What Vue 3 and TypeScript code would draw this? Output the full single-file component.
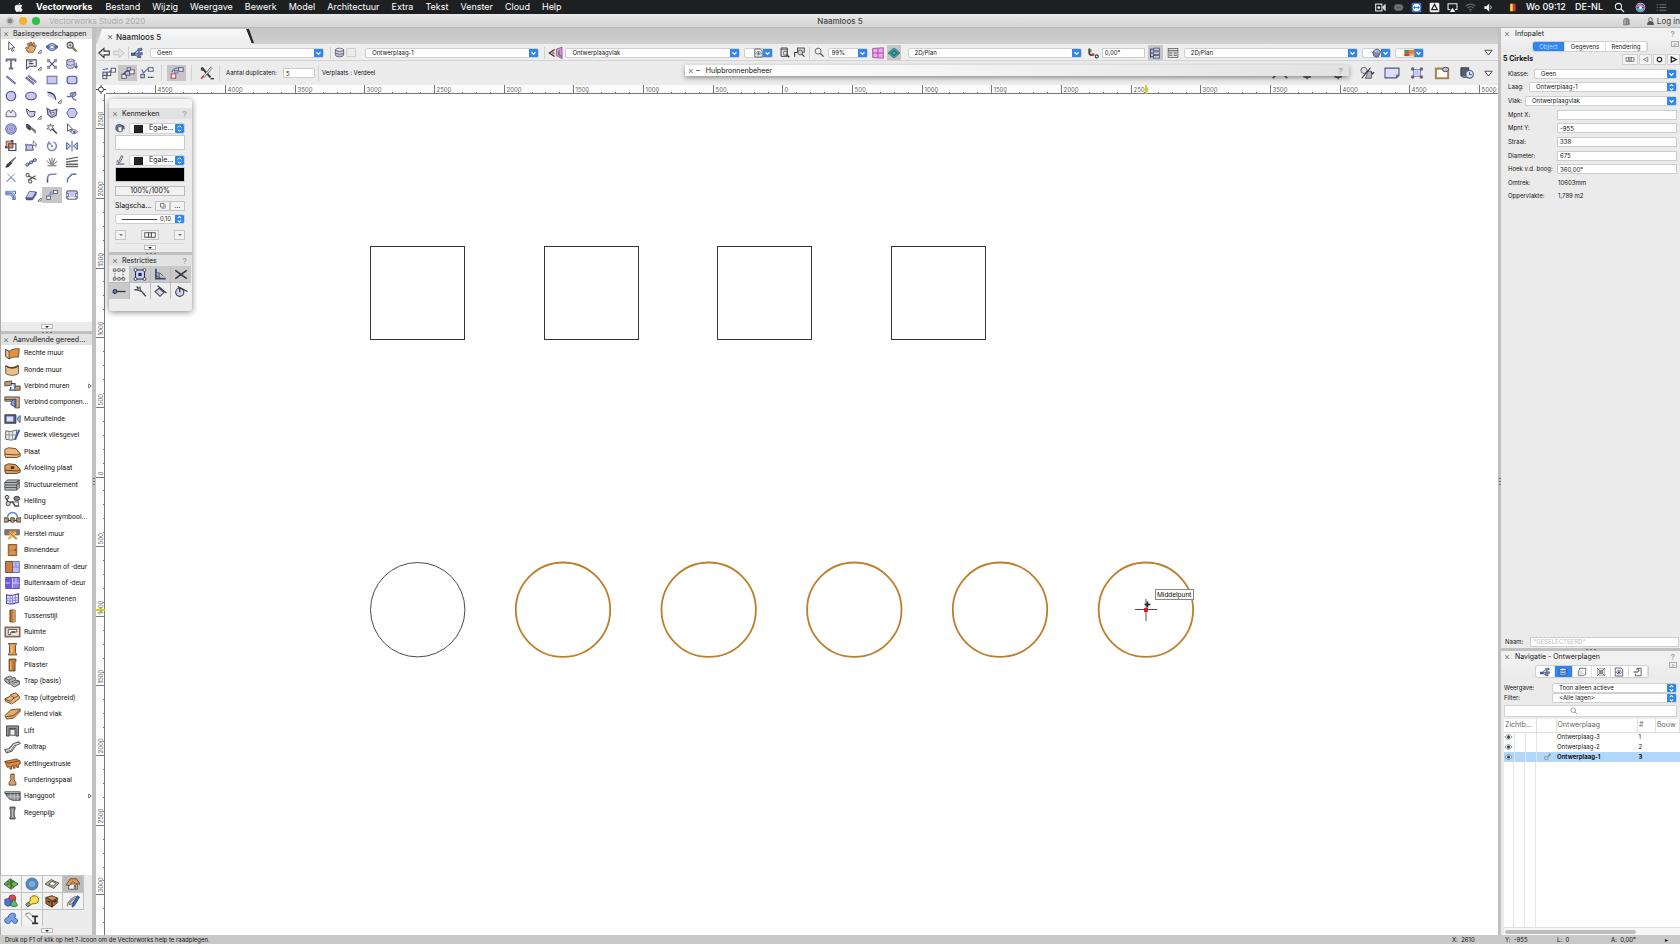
<script setup lang="ts">
import { ref } from 'vue'

interface Tick { at: number; label: string }
interface Layer { name: string; nr: number }

const menus = ['Bestand', 'Wijzig', 'Weergave', 'Bewerk', 'Model', 'Architectuur', 'Extra', 'Tekst', 'Venster', 'Cloud', 'Help']

const L = '#c8c8f6'
const O = '#4c4c5c'
const B = '#7f86c4'

const icons: Record<string, string> = {
  apple: `<path fill="#f2f2f2" d="M10.6 1c.1 1.500-1.200 2.900-2.700 2.900C7.700 2.500 9.100 1.100 10.600 1zM8.200 4.800c.7 0 1.400-.8 2.700-.8 1 0 2 .5 2.600 1.400-2.300 1.400-1.900 4.600.5 5.500-.6 1.600-1.800 3.600-3 3.600-.9 0-1.300-.6-2.400-.6s-1.500.6-2.400.6C4.500 14.500 2.500 11 2.500 8.200 2.500 5.500 4.200 4 5.900 4c1.100 0 1.600.8 2.300.8z"/>`,
  camera: `<rect x="1" y="3" width="9" height="10" fill="none" stroke="#eee" stroke-width="1.500"/><circle cx="5.500" cy="8" r="2" fill="#eee"/><path d="M11 8l3-4v8zM15 3v10" stroke="#eee" fill="#eee"/>`,
  cloudcc: `<rect x="1" y="3" width="14" height="10" rx="5" fill="#555"/><path d="M9 6a3 3 0 1 0 0 4M9 10a2.500 2.500 0 1 0 0-4" fill="none" stroke="#999" stroke-width="1.300"/>`,
  viewer: `<rect x="1" y="1" width="14" height="14" rx="2" fill="#2f7de0"/><circle cx="8" cy="8" r="5.500" fill="#fff"/><path d="M3 8l3-2.500v1.700h4V5.500L13 8l-3 2.500V8.800H6v1.700z" fill="#2f7de0"/>`,
  drive: `<rect x="1" y="1" width="14" height="14" rx="2" fill="#f4f4f4"/><path d="M8 3.500L12 11H4z" fill="none" stroke="#222" stroke-width="1.800"/>`,
  airplay: `<path d="M4.500 11H1.500V2.500h13V11h-3" fill="none" stroke="#eee" stroke-width="1.500"/><path d="M8 8.500l4 6H4z" fill="#eee"/>`,
  wifi: `<path d="M1 6a10 10 0 0 1 14 0M3.500 8.800a6.500 6.500 0 0 1 9 0M6 11.500a3 3 0 0 1 4 0" fill="none" stroke="#666" stroke-width="1.600"/><circle cx="8" cy="13.500" r="1" fill="#666"/>`,
  speaker: `<path d="M2 6h3l4-4v12l-4-4H2z" fill="#f2f2f2"/><path d="M11 5.500a4 4 0 0 1 0 5" stroke="#f2f2f2" fill="none" stroke-width="1.300"/>`,
  flag: `<path fill="#222" d="M2 2.500h4v11H2z"/><path fill="#f8d83a" d="M6 2.500h4v11H6z"/><path fill="#e0303c" d="M10 2.500h4v11h-4z"/>`,
  search: `<circle cx="6.500" cy="6.500" r="4.500" fill="none" stroke="#eee" stroke-width="1.500"/><path d="M10 10l4.500 4.500" stroke="#eee" stroke-width="1.800"/>`,
  searchGrey: `<circle cx="6.500" cy="6.500" r="4.700" fill="none" stroke="#777" stroke-width="1.300"/><path d="M10 10l4.500 4.500" stroke="#777" stroke-width="1.500"/>`,
  siri: `<circle cx="8" cy="8" r="7" fill="#c9c9d8"/><circle cx="8" cy="8" r="6" fill="#4a4f86"/><path d="M2 8c2-7 8-7 12 0-5-2-8-2-12 0z" fill="#d77fb4"/><path d="M2.500 9c4-1 7-1 11 0-2 6-9 6-11 0z" fill="#55b6e6"/><circle cx="8" cy="8" r="2" fill="#fff"/>`,
  list: `<path d="M1 4h2M5 4h10M1 8h2M5 8h10M1 12h2M5 12h10" stroke="#777" stroke-width="1.400"/>`,
  bell: `<path d="M3 14V7a4 5 0 0 1 8 0v7zM8 14V4a3 5 0 0 1 5 3v7" fill="#aaa" stroke="#666" stroke-width="1.200"/>`,
  lock: `<path d="M5 7V4a3 3 0 0 1 6 0v3" fill="none" stroke="#555" stroke-width="1.500"/><path d="M2 14c0-5 2-7 6-7s6 2 6 7z" fill="#555"/>`,

  select: `<path d="M5 1v11l2.700-2.500L9.500 14l2-1-2-4h3.500z" fill="#fff" stroke="${O}" stroke-width="1.200"/>`,
  hand: `<path d="M4 15L.5 9.500 2 8l2.500 2L3.500 3.500l1.800-.6L6.500 7 6.600 1.500h1.900L9.200 7l1.600-5 1.700.5-.8 5.500 1.800-2.700 1.500.9L12.800 12 11 15z" fill="#e9a868" stroke="#5d4430" stroke-width="1"/>`,
  fly: `<ellipse cx="8" cy="8" rx="7.500" ry="3.500" fill="#9fb4e8" stroke="#35497c"/><circle cx="8" cy="8" r="5" fill="#aeb9f0" stroke="#35497c"/><path d="M0 7l3-2v5zM16 7l-3-2v5z" fill="#2f62b5"/><path d="M4 8l4-2 4 2-4 2.500z" fill="#fff" stroke="#35497c" stroke-width=".8"/>`,
  zoom: `<circle cx="5.500" cy="5.500" r="4" fill="#e8e6dc" stroke="${O}" stroke-width="1.400"/><path d="M8.500 8.500l5.500 5.500" stroke="#8d7a55" stroke-width="3"/><path d="M3.500 5.500h4M5.500 3.500v4" stroke="${O}"/>`,
  text: `<path d="M2 5V2h12v3M8 2v12M5 14h6" fill="none" stroke="#6b6b80" stroke-width="2.400"/>`,
  callout: `<path d="M2 11V2.500h13V11H6l-4 3.500z" fill="#f0f0f8" stroke="${O}" stroke-width="1.400"/><path d="M5 5h5M5 7.500h6" stroke="${O}" stroke-width="1.600"/>`,
  locus: `<path d="M3.500 3.500l9 9M12.500 3.500l-9 9" stroke="${O}" stroke-width="1.500"/><path d="M2 2h3v3H2zM11 2h3v3h-3zM2 11h3v3H2zM11 11h3v3h-3z" fill="#a3a3c8" stroke="${O}" stroke-width=".7"/>`,
  cyl: `<path d="M1 3v8c0 4 10 4 10 0V3z" fill="${L}" stroke="${O}"/><path d="M1 3c2-2 8-2 10 0-2 2-8 2-10 0zM1 8c2 2 8 2 10 0" fill="#ececff" stroke="${O}"/><path d="M13.500 6v7M11.500 11l2 2.500 2-2.500" fill="none" stroke="#35539c" stroke-width="1.400"/>`,
  line: `<path d="M2 3l12 10" stroke="#55587e" stroke-width="3"/><path d="M2 3l12 10" stroke="#a9addf" stroke-width="1.300"/>`,
  dline: `<path d="M1 4.500l11 9M4 2l11 9" stroke="#55587e" stroke-width="2.600"/><path d="M1 4.500l11 9M4 2l11 9" stroke="#a9addf" stroke-width="1"/>`,
  rect: `<rect x="1.500" y="3" width="13" height="10" fill="${L}" stroke="#666680" stroke-width="1.300"/>`,
  rrect: `<rect x="1.500" y="3" width="13" height="10" rx="3.500" fill="${L}" stroke="#55587e" stroke-width="1.600"/>`,
  circle: `<circle cx="8" cy="8" r="6.300" fill="${L}" stroke="#55587e" stroke-width="1.600"/>`,
  ellipse: `<ellipse cx="8" cy="8" rx="7" ry="5" fill="${L}" stroke="#55587e" stroke-width="1.600"/>`,
  arc: `<path d="M2 3c6 0 11 4 11 10L2 8z" fill="${L}"/><path d="M2 3c6 0 11 4 11 10" fill="none" stroke="#3f4158" stroke-width="1.800"/>`,
  free: `<path d="M1 8c4 3 8-1 11-5 3 4-2 7-5 5-3-3 0-5 4-4M8 8c0 4 4 6 6 5" fill="none" stroke="#6a71a8" stroke-width="1.800"/>`,
  poly1: `<path d="M1.500 13V8L5 4l3 4 2-4 4.500 4v5z" fill="#e4e4f4" stroke="#666" stroke-width="1.300"/>`,
  poly2: `<path d="M1.500 2.500l5 3.500h7l-1 6-5 1.500-4-4z" fill="${L}" stroke="${O}" stroke-width="1.300"/>`,
  poly3: `<path d="M1.500 2l5 3 8-2-1 8-6 3-5-4z" fill="${L}" stroke="#55587e" stroke-width="1.600"/><path d="M4.500 5.500L7 8l4-1-.5 3L7.500 11z" fill="#fff" stroke="#55587e"/>`,
  hex: `<path d="M4.500 2h7L15 8l-3.500 6h-7L1 8z" fill="${L}" stroke="#5a6280" stroke-width="1.300"/>`,
  spiral: `<circle cx="8" cy="8" r="7" fill="${L}" stroke="#6b70a8" stroke-width="1.500"/><circle cx="8" cy="8" r="4.700" fill="none" stroke="${B}" stroke-width="1.400"/><circle cx="8" cy="8" r="2.400" fill="#9da3e0" stroke="${B}"/>`,
  dropper: `<path d="M2 1.500l4 1.500 3 4-2.500 2.500-4-3z" fill="#4b4b66" stroke="#333"/><path d="M8 7l6.500 6.500M9.500 6.500l5 5" stroke="#777" stroke-width="1.600"/>`,
  wand: `<path d="M7 7l7.500 7" stroke="#444" stroke-width="2.200"/><path d="M6 1l1 3 3-1-1.500 3L11 8 7.500 8 6 11 5 8 1 8l2.500-2L2 3l3 1z" fill="#eee" stroke="${O}"/>`,
  arrowEye: `<path d="M2 1v10l2.500-2L6 12l1.500-1L6 8.500h3z" fill="#fff" stroke="${O}" stroke-width="1.200"/><path d="M6 12c3-4 7-4 9.500 0-3 3-7 3-9.500 0z" fill="#dfe4ff" stroke="${O}"/><circle cx="11" cy="12" r="1.600" fill="#2f62b5"/>`,
  scale: `<rect x="1.500" y="1.500" width="9" height="9" fill="#f3a65c" stroke="${O}"/><rect x="5" y="5" width="9.500" height="9" fill="none" stroke="#3f4158" stroke-width="1.500"/><path d="M5 5h5.500v5.500H5z" fill="#e98a34" stroke="#35539c"/><path d="M0 8h3v3H0zM8 0h3v3H8z" fill="#35497c"/>`,
  reshape: `<path d="M1.500 6.500h8l1.500 7H1.500z" fill="${L}" stroke="${O}" stroke-width="1.300"/><path d="M11 1v7l1.500-1.500L14 9l1-.7-1-2h1.800z" fill="#fff" stroke="${O}" stroke-width=".9"/><path d="M0 5h3v3H0zM0 12h3v3H0z" fill="${B}"/>`,
  rotate: `<path d="M4 3.500a6 6 0 1 0 6-1" fill="none" stroke="${B}" stroke-width="2"/><path d="M3 1v5h5z" fill="${B}"/><circle cx="8" cy="8" r="1.500" fill="${B}"/>`,
  mirror: `<path d="M8 1v14" stroke="#35539c" stroke-width="1.300"/><path d="M1 3.500v9L6 8zM15 3.500v9L10 8z" fill="#dfe4ff" stroke="#35497c" stroke-width="1.300"/>`,
  knife: `<path d="M14.500 1.500L6 8l2 2z" fill="#999" stroke="${O}"/><path d="M7 8l2 2-5 4.500-3 .5 2-4z" fill="#3d3d4c" stroke="#222" stroke-width=".8"/>`,
  chain: `<path d="M1 13L15 4" stroke="#35497c" stroke-width="2"/><circle cx="3" cy="11.500" r="2" fill="#a9b8e8" stroke="#35497c"/><circle cx="8" cy="8.500" r="2" fill="#a9b8e8" stroke="#35497c"/><circle cx="13" cy="5.500" r="2" fill="#a9b8e8" stroke="#35497c"/>`,
  comb: `<path d="M2 13h12M8 13L1 6M8 13L4 3M8 13V2M8 13l4-10M8 13l7-6" stroke="#555" stroke-width="1.200"/><path d="M5 13l3-4 3 4z" fill="#999"/>`,
  hatch: `<path d="M0 4.500L16 1.500M0 8L16 6M0 11h16M0 14h16" stroke="#666" stroke-width="1.900"/>`,
  trim: `<path d="M2 13l6-6 6 6" stroke="#8fa0c8" fill="none" stroke-width="1.800"/><path d="M3 2l5 5 5-5" stroke="#999" fill="none" stroke-width="1.300"/>`,
  scissors: `<path d="M4 5l11 5M4 11L14 5" stroke="#555" stroke-width="1.800"/><circle cx="3.500" cy="4" r="2.200" fill="none" stroke="#666" stroke-width="1.400"/><circle cx="7" cy="12.500" r="2.200" fill="none" stroke="#666" stroke-width="1.400"/>`,
  fillet: `<path d="M2 14V9c0-4 2-6 6-6h6" fill="none" stroke="${B}" stroke-width="2.200"/><path d="M2 14V9" stroke="#555" stroke-width="1.500"/>`,
  chamfer: `<path d="M2 14V9l6-6h6" fill="none" stroke="#5974ae" stroke-width="1.900"/>`,
  offset: `<path d="M1 3h5c5 0 8 4 8 11h-4c0-4-1-6-4-6H1z" fill="#b9c6ee" stroke="#6b7fc0" stroke-width="1.200"/><path d="M1 5.500h5c3 0 6 3 6 8.500M10 3h4v4" fill="none" stroke="#35539c" stroke-width="1.200"/>`,
  eraser: `<path d="M6 3l9 1-5 8H1z" fill="#c6c9ee" stroke="${O}"/><path d="M1 12l9 0 5-8v3l-5 7.500H2z" fill="#5560a8" stroke="#35497c" stroke-width=".8"/>`,
  dup: `<path d="M3 9L9 4" stroke="#6b7fae" stroke-width="1.300"/><rect x="1" y="9.500" width="5" height="4.500" fill="#eee" stroke="${O}"/><rect x="10" y="2" width="5" height="4" fill="#eef" stroke="${O}"/><rect x="5.500" y="4" width="4" height="3" fill="#a9b8e8" stroke="#5974ae" stroke-width=".8"/>`,
  plate: `<rect x="1" y="2.500" width="14" height="11" rx="1.500" fill="${L}" stroke="${O}" stroke-width="1.300"/><path d="M1 6h2v4H1M15 6h-2v4h2" fill="#fff" stroke="${O}"/><path d="M4 12h8" stroke="#fff" stroke-width="1.500"/>`,

  back: `<path d="M1 8l7-6v3.500h7v5H8V14z" fill="#f6f6f6" stroke="#333" stroke-width="1.400"/>`,
  fwd: `<path d="M15 8L8 2v3.500H1v5h7V14z" fill="#e4e4e4" stroke="#c4c4c4" stroke-width="1.300"/>`,
  classes: `<path d="M3 9.500L9 4.500M3 9.500l6-.5M3 9.500l6 3" stroke="#35497c" stroke-width="1.400"/><path d="M9 2.500l5-1 1 2.500-5 2zM9 7.500h6v2.700H9zM9 11.500l4 .3V14H9z" fill="#6f8cc8" stroke="#2c3c68" stroke-width=".9"/><path d="M0 8.200h4.500v3H0z" fill="#4a66a4" stroke="#2c3c68" stroke-width=".9"/>`,
  layers: `<path d="M2 4v8c2 3 10 3 12 0V4z" fill="#b8b8e0" stroke="#444"/><path d="M2 4c2-3 10-3 12 0-2 3-10 3-12 0zM2 8c2 3 10 3 12 0" fill="#e6e6fa" stroke="#444"/>`,
  blank: `<rect x="1" y="2" width="13" height="12" rx="1" fill="#ececec" stroke="#bbb"/>`,
  planeEye: `<path d="M7 4L1 8l6 4" fill="none" stroke="#333" stroke-width="1.500"/><circle cx="5.500" cy="8" r="1.500" fill="#b08030"/><path d="M9 3.500l6.500-2v13L9 11z" fill="#e08fdc" stroke="#8a4088" stroke-width=".8"/><path d="M12 5v5l3 2" fill="none" stroke="#2f8a60" stroke-width="1.500"/>`,
  eyePage: `<path d="M2 1.500h9l3 3v10H2z" fill="#eee" stroke="#444" stroke-width="1.200"/><path d="M3.500 8.500c3-4 6-4 9 0-3 3.500-6 3.500-9 0z" fill="#fff" stroke="#35497c"/><circle cx="8" cy="8.500" r="1.800" fill="#35497c"/>`,
  pageZoom: `<path d="M3 1.500h9v12H3z" fill="#f6f6f6" stroke="#333" stroke-width="1.400"/><path d="M3 4h9" stroke="#333"/><circle cx="9" cy="9" r="3" fill="#ddd" stroke="#333"/><path d="M11 11l4 4" stroke="#333" stroke-width="1.800"/>`,
  objZoom: `<rect x="5" y="1.500" width="10" height="6" fill="#dde" stroke="#444" stroke-width="1.300"/><circle cx="9" cy="8" r="3.500" fill="#ccc" stroke="#333"/><path d="M11.500 10.500L15 14M1 14V8h4" stroke="#333" stroke-width="1.500" fill="none"/>`,
  mag: `<circle cx="6" cy="6" r="4.300" fill="#f4f4f4" stroke="#555" stroke-width="1.300"/><path d="M9 9l5 5" stroke="#555" stroke-width="2"/>`,
  pinkGrid: `<path d="M1 2l14-1v14L1 14z" fill="#eda9e8" stroke="#b04fab" stroke-width="1.300"/><path d="M8 1.500v13M1 8h14" stroke="#b04fab" stroke-width="1.400"/>`,
  teal: `<path d="M0 8l7-6h2l7 6-7 6H7z" fill="#3f9ea2" stroke="#1f6f76"/><path d="M3.500 8h9M8 4v8" stroke="#155a60" stroke-width="1.500"/><circle cx="8" cy="8" r="2.500" fill="#5ab5b5" stroke="#155a60"/>`,
  angle: `<path d="M3 2v6a3 3 0 0 0 5 2" fill="none" stroke="#444" stroke-width="2.500"/><path d="M5 3v4" stroke="#3b9a3b" stroke-width="2"/><circle cx="8" cy="10" r="2" fill="#d04040"/><circle cx="13" cy="12.500" r="2" fill="#fff" stroke="#333" stroke-width="1.400"/>`,
  struct: `<path d="M2 2v12M2 3h5M2 8h5M2 13h5" stroke="#35497c" stroke-width="1.400"/><rect x="6" y="1.500" width="8" height="3.500" fill="${L}" stroke="${O}"/><rect x="6" y="6.500" width="8" height="3.500" fill="${L}" stroke="${O}"/><rect x="6" y="11.300" width="8" height="3.500" fill="${L}" stroke="${O}"/>`,
  grid: `<rect x="1.500" y="2" width="13" height="12" fill="#e4e4e4" stroke="#555"/><path d="M1.500 5h13M3 8h4M9 8h4M3 11h4M9 11h4" stroke="#555" stroke-width="1.600"/>`,
  pot: `<path d="M2 7h12l-2 6-3 1.500H7L4 13z" fill="#7f86c4" stroke="#333"/><path d="M3 7c0-4 3-5 6-5 2 0 5 2 5 5M14 6l2-2M0 6l3 2" fill="#b3b6dc" stroke="#35497c" stroke-width="1.300"/>`,
  pal: `<path d="M0 3h16v10H0z" fill="#c9776a"/><path d="M0 3h7v5H0z" fill="#4a9a4a"/><path d="M8 3h8v5H8z" fill="#ee7c3c"/><path d="M0 9h7v4H0z" fill="#cc3c3c"/><path d="M8 9h8v4H8z" fill="#efba52"/>`,
  tri: `<path d="M1.500 4h13L8 12.500z" fill="#fafafa" stroke="#333" stroke-width="1.500"/>`,
  dupA: `<path d="M1 4l6-1M5 11l5-6" stroke="#5974ae" stroke-width="1.300"/><rect x="1" y="7" width="4.500" height="4" fill="${L}" stroke="${O}"/><rect x="1" y="11" width="4.500" height="3.500" fill="#eee" stroke="${O}"/><rect x="6" y="7" width="4" height="4" fill="#fff" stroke="${O}"/><rect x="10.500" y="2.500" width="5" height="4.500" fill="#fff" stroke="${O}"/>`,
  dupB: `<path d="M2 10L11 2" stroke="#35497c" stroke-width="1.600"/><rect x="1" y="9.500" width="5" height="4.500" fill="#eee" stroke="${O}"/><rect x="5" y="6.500" width="5" height="4" fill="${L}" stroke="${O}"/><rect x="10" y="4.500" width="5" height="4.500" fill="#fff" stroke="${O}"/><rect x="7" y="2" width="4" height="3" fill="${L}" stroke="${O}" stroke-width=".8"/>`,
  dupC: `<path d="M2 4l2 4 5-5" stroke="#5974ae" stroke-width="1.500" fill="none"/><rect x="1" y="9.500" width="4" height="4" fill="${L}" stroke="${O}"/><rect x="9.500" y="2" width="5.500" height="4" fill="#eef" stroke="${O}"/><path d="M9 13h2M12 13h2M14.500 13h1" stroke="#333" stroke-width="1.300"/>`,
  dupRed: `<path d="M2 7c2-4 5-5 8-5" stroke="#5974ae" stroke-width="1.300" fill="none"/><rect x="1.500" y="9" width="5" height="5" fill="#fff" stroke="#d04858" stroke-width="1.300"/><rect x="10" y="2" width="5" height="4" fill="#eef" stroke="${O}"/><rect x="5" y="5" width="4" height="3" fill="#a9b8e8" stroke="#5974ae" stroke-width=".8"/>`,
  tools: `<path d="M3 3l9 10" stroke="#333" stroke-width="2.200"/><path d="M13.500 1.500L4 12.500" stroke="#555" stroke-width="2.600"/><path d="M13.500 1.500L4 12.500" stroke="#eee" stroke-width="1.200"/><path d="M1 2l2-1 2 2-1.500 2.500L1 5z" fill="#444"/><path d="M1.500 14.500l2.500-3" stroke="#d03a3a" stroke-width="2"/><path d="M12 14.500h4" stroke="#333" stroke-width="1.500"/>`,
  snapArc: `<path d="M0 14c5-8 11-8 16 0" fill="none" stroke="#555" stroke-width="2"/>`,
  gear: `<circle cx="7" cy="9" r="4.500" fill="#8d93c8" stroke="#444" stroke-width="1.300"/><path d="M1 9h12M7 3v12M3 5l8 8M11 5l-8 8" stroke="#444" stroke-width="1.200"/><circle cx="7" cy="9" r="1.500" fill="#fff"/>`,
  hatchSh: `<circle cx="4.500" cy="5" r="3.500" fill="#dfe0ee" stroke="#555"/><path d="M8 6h5v8H6l2-4z" fill="#aeb3c8" stroke="#555"/><path d="M2 14L12 2" stroke="#222" stroke-width="1.200"/><path d="M13 7l1.500 2L16 7" fill="none" stroke="#333" stroke-width="1.300"/>`,
  sheet: `<path d="M0 2.500h16v8l-3 3H0z" fill="#dcdcfa" stroke="#555578" stroke-width="1.300"/><path d="M16 10.500h-3v3z" fill="#99a" stroke="#555578"/>`,
  nodes: `<path d="M4 4h8v8H4z" fill="${L}" stroke="${B}"/><circle cx="3" cy="3.500" r="2" fill="#666" /><circle cx="13" cy="3.500" r="2" fill="#666"/><circle cx="3" cy="12.500" r="2" fill="#666"/><circle cx="13" cy="12.500" r="2" fill="#666"/>`,
  frame: `<path d="M1 3h14v11H1z" fill="#fff" stroke="#a8854c" stroke-width="2.300"/><ellipse cx="12" cy="4" rx="3.500" ry="2.500" fill="#b8bce6" stroke="#444"/>`,
  clock: `<path d="M1 2h9v9H1z" fill="#555c70" stroke="#333"/><path d="M1 11c3 3 6 3 9 0" fill="#8790ad" stroke="#444"/><circle cx="11" cy="9.500" r="4.300" fill="#dfe4ff" stroke="#4a5a8c" stroke-width="1.300"/><path d="M11 7v3h2.500" stroke="#333" fill="none"/>`,

  fill: `<circle cx="7" cy="8" r="6" fill="#6e78a0" stroke="#35497c"/><path d="M5 6h6v8H5z" fill="#fff" stroke="#444"/><path d="M11 4c3 0 4 3 3 6" fill="none" stroke="#35497c" stroke-width="2"/>`,
  pen: `<path d="M10 1l3 1-5 10-3 1 1-3z" fill="#c9ccd8" stroke="#444"/><path d="M4 8l-1 4" stroke="#c84848" stroke-width="1.500"/><path d="M2 14.500h13" stroke="#35497c" stroke-width="1.600"/>`,
  c1: `<path d="M3 3h10v10H3z" fill="none" stroke="#555" stroke-dasharray="2 1.500"/><path d="M1 1h3v3H1zM12 1h3v3h-3zM1 12h3v3H1zM12 12h3v3h-3zM6.500 1h3v3h-3zM6.500 12h3v3h-3z" fill="#eee" stroke="#444" stroke-width=".9"/>`,
  c2: `<path d="M2.500 2.500h11v11h-11z" fill="#cfd4f4" stroke="#222c58" stroke-width="1.300"/><path d="M6 6h4v4H6z" fill="#222c58"/><circle cx="2.500" cy="2.500" r="1.800" fill="#fff" stroke="#222c58"/><circle cx="13.500" cy="2.500" r="1.800" fill="#fff" stroke="#222c58"/><circle cx="2.500" cy="13.500" r="1.800" fill="#fff" stroke="#222c58"/><circle cx="13.500" cy="13.500" r="1.800" fill="#fff" stroke="#222c58"/>`,
  c3: `<path d="M3 1v12h12" fill="none" stroke="#35497c" stroke-width="2.200"/><path d="M3 6h4v7M3 9l6 4M8 6l4 4" stroke="#444" fill="#a9b0dc"/>`,
  c4: `<path d="M1 3l14 10M1 13L15 3" stroke="#333" stroke-width="1.800"/><circle cx="8" cy="8" r="2" fill="#35497c"/>`,
  c5: `<path d="M4 8h12" stroke="#333" stroke-width="1.600"/><circle cx="3" cy="8" r="2.300" fill="#7f86c4" stroke="#222c58" stroke-width="1.300"/>`,
  c6: `<path d="M1 6h6L4 2l8 8 3 4" fill="none" stroke="#333" stroke-width="1.500"/><path d="M4 6l4-4 1 6z" fill="#9ba2d0" stroke="#444"/>`,
  c7: `<path d="M2 8l5-4 6 5-5 5z" fill="#cdd2f6" stroke="#444" stroke-width="1.300"/><path d="M5 1l11 9" stroke="#333" stroke-width="1.500"/>`,
  c8: `<circle cx="6.500" cy="9" r="5" fill="#cdd2f6" stroke="#444" stroke-width="1.400"/><path d="M4 2l12 6M6.500 9V4" stroke="#333" stroke-width="1.500"/>`,

  s1: `<path d="M0 8l7-6 9 6-8 6z" fill="#8aa878" stroke="#2b5c23"/><path d="M4 5l7 6M8 3v10M3 9l9-4" stroke="#285c20" stroke-width="1.300"/><circle cx="5" cy="7" r="2" fill="#4c9c38"/><circle cx="11" cy="8" r="2" fill="#68b84c"/><circle cx="8" cy="5" r="1.600" fill="#3c8030"/>`,
  s2: `<circle cx="8" cy="8" r="6.800" fill="#3f8fd6" stroke="#7b7b7b" stroke-width="1.300"/><circle cx="8" cy="8" r="3.500" fill="#78b6e8"/><path d="M8 5l1 3-1 3-1-3z" fill="#c08a3a"/>`,
  s3: `<path d="M0 8l7-5 9 4-6 6z" fill="#c4b99e" stroke="#4c463a"/><path d="M4 8l4-3 4.500 2.200-3 3.300z" fill="#fff" stroke="#4c463a"/>`,
  s4: `<path d="M3 8h10v6H3z" fill="#f4efe6" stroke="#555"/><path d="M0 9l5-7h7l4 6h-5L8 5 4 10z" fill="#dc9658" stroke="#704820"/><path d="M9 9h3v5H9z" fill="#777"/>`,
  s5: `<circle cx="9.500" cy="5" r="4" fill="#e04850" stroke="#802020" stroke-width=".8"/><path d="M1 6l5-1 2 3v5l-4 1-3-2z" fill="#4f74d0" stroke="#203c80" stroke-width=".8"/><path d="M11 5l4.500 8c-2 2-6 2-8 0z" fill="#52c070" stroke="#206030" stroke-width=".8"/>`,
  s6: `<path d="M6 8a5 4.500 0 1 1 5 3c-2 0-3 0-5 2l-3 1.500L1 12z" fill="#f6e04c" stroke="#6c5c14"/><path d="M1 12l3-3 2 3-3 2.500z" fill="#999" stroke="#444" stroke-width=".8"/>`,
  s7: `<path d="M1 4l7-2 7 3-6 3z" fill="#c9925e" stroke="#4e2e16"/><path d="M1 4v7l7 4V8zM8 8v7l6-5V5z" fill="#a86e3c" stroke="#4e2e16"/><path d="M3 8l3 1.500M10 9l3-1.500" stroke="#2c180a" stroke-width="1.500"/>`,
  s8: `<path d="M2 14C0 10 9 3 11 3s1 3-1 5-5 5-6 4 4-6 6-7" fill="none" stroke="#888" stroke-width="1.500"/><path d="M13 2l2.500 1.500-6 10L7 15v-3z" fill="#4068b8" stroke="#203c80" stroke-width=".8"/>`,
  s9: `<path d="M1 12c-1-3 2-5 4-5 0-4 6-6 8-3 1 2-1 3-1 4 3 0 4 3 3 5-2 2-5 1-5-1-1-1-3-1-3 1-1 2-5 2-6-1z" fill="#78a0e8" stroke="#2c4c98"/>`,
  s10: `<path d="M1 3l4-1 5 5M1 3v2l9 9" fill="#eee" stroke="#777"/><path d="M8 6h7M11.500 6v8M8 14h7" stroke="#333" stroke-width="2"/>`,

  a1: `<path d="M2 4l4 2c4-3 7-3 12-3l-1 10c-4-1-7 0-11 2l-4-3z" fill="#e39244" stroke="#5a4630"/><path d="M2 4l4 2v9l-4-3z" fill="#f4c48e" stroke="#5a4630"/>`,
  a2: `<path d="M2 3c4 3 10 3 15 0v9c-4 3-11 3-15 0z" fill="#e9c08e" stroke="#5a4630"/><path d="M2 3c4 3 10 3 15 0" stroke="#5a4630" stroke-width="1.800" fill="none"/>`,
  a3: `<path d="M1 3l8-1v5l-8 1zM12 8h7v5h-6z" fill="#c89468" stroke="#444"/><path d="M8 5h5v5M8 9l-1 4h6" fill="#a8c4ec" stroke="#35497c" stroke-width="1.300"/>`,
  a4: `<path d="M1 2h17v13h-5V7H1z" fill="#d7a87a" stroke="#444"/><path d="M1 5h13v9" fill="none" stroke="#444"/><path d="M9 7l4-3v10l-5-3z" fill="#7f9ed4" stroke="#35497c"/>`,
  a5: `<path d="M1 3h13v10H1z" fill="#555c78" stroke="#333"/><path d="M3 5h8v6H3z" fill="#d4e2fa"/><path d="M19 4c-4 2-4 6 0 8z" fill="#a8bff0" stroke="#35497c"/>`,
  a6: `<path d="M2 3l6 1 7-2-1 11-6 1-6-1z" fill="#e8eaf0" stroke="#555"/><path d="M6 4v9M10 4v10M2 8h12" stroke="#888"/><path d="M18 2l-5 11" stroke="#3560b8" stroke-width="2.400"/>`,
  a7: `<path d="M1 5l4-2 9 1 5 6v3l-4 1.500H2L1 12z" fill="#edb67a" stroke="#5a3e20"/><path d="M1 10.500l14 1 4-1.500" stroke="#5a3e20" fill="none"/>`,
  a8: `<path d="M1 5l4-2 9 1 5 6v3l-4 1.500H2L1 12z" fill="#dc9c58" stroke="#4e361c"/><path d="M1 10.500l14 1 4-1.500" stroke="#4e361c" fill="none"/><path d="M8 6h4v3H8z" fill="#333"/>`,
  a9: `<path d="M1 5l3-3h14v9l-3 3H1z" fill="#b4b8bc" stroke="#444"/><path d="M1 5h14l3-3M1 8h14v6M1 11h14M15 8l3-3" fill="none" stroke="#555" stroke-width="1.300"/>`,
  a10: `<path d="M2 3l3 7 5-1 3 5h5" fill="none" stroke="#444" stroke-width="1.800"/><circle cx="3.500" cy="3.500" r="2.200" fill="#ccc" stroke="#333"/><circle cx="5" cy="11" r="2.500" fill="#ccc" stroke="#333"/><ellipse cx="15" cy="5" rx="3.500" ry="2.500" fill="#888" stroke="#333"/><path d="M11 9h6v4" fill="none" stroke="#777" stroke-width="1.500"/>`,
  a11: `<path d="M4 8c2-7 10-7 12 0" fill="none" stroke="#5c8ed4" stroke-width="1.800"/><path d="M0 9h5v5H0zM8 9h4v5H8zM15 9h5v5h-5z" fill="#c8a06e" stroke="#333"/><path d="M5 12h3M12 12h3" stroke="#333" stroke-width="1.500"/>`,
  a12: `<path d="M1 3h17v6H1z" fill="#c8863e" stroke="#555"/><path d="M1 3h5v5H1zM14 3h4v5h-4z" fill="#777"/><path d="M6 6l9 8M14 6l-9 8" stroke="#edb55e" stroke-width="3"/><path d="M6 6l9 8" stroke="#7a5020" stroke-width=".8"/>`,
  a13: `<path d="M5 1.500h10v13H5z" fill="#c8813f" stroke="#7a4c1c"/><path d="M7 3.500h6v4H7zM7 9h6v4H7z" fill="#d69452"/><circle cx="13" cy="8" r=".9" fill="#333"/>`,
  a14: `<path d="M2 1.500h16v13H2z" fill="#bcbcfa" stroke="#5c5c90"/><path d="M2 1.500h8v13H2z" fill="#c8813f" stroke="#7a4c1c"/><path d="M10 8h8M14 2v6" stroke="#7c7cd8"/>`,
  a15: `<path d="M2 1.500h16v13H2z" fill="#8e7ef0" stroke="#443c9c"/><path d="M2 1.500h8v13H2z" fill="#6a5ad8"/><path d="M10 2v12M10 8h8M2 8h5M14 2v6" stroke="#cfc8ff" stroke-width="1.300"/>`,
  a16: `<path d="M3 3c4 2 9 0 14-1v10c-4 1-10 3-14 1z" fill="#e4e4ff" stroke="#504c9c" stroke-width="1.300"/><path d="M7 4v10M10 3.500V14M13.500 3v10M3 7c5 1 9 0 14-1M3 10c5 1 9 0 14-1" fill="none" stroke="#8480d0"/>`,
  a17: `<path d="M7 1h6v14H7z" fill="#b8752f" stroke="#4e361c"/><path d="M10 1h3v14h-3z" fill="#d79850"/>`,
  a18: `<path d="M1.500 2.500h17v11h-17z" fill="#efe4dc" stroke="#8c6a5c" stroke-width="2"/><path d="M5 5h10v3H8v3H5z" fill="#fff" stroke="#444"/><path d="M9 8h4" stroke="#333" stroke-width="1.500"/>`,
  a19: `<path d="M5 1.500h10L13.500 4v8l1.500 3H5l1.500-3V4z" fill="#e19a50" stroke="#5a3e20"/><path d="M9 4v8" stroke="#f6cc98" stroke-width="1.500"/>`,
  a20: `<path d="M6 1h8v3l-1 1v10H6z" fill="#c47c34" stroke="#4e361c"/><path d="M8 4v10" stroke="#ecb474" stroke-width="1.500"/>`,
  a21: `<path d="M1 5l6-3 3 2h3l1 3 4 1v4l-6 3-4-3-3-1-4-3z" fill="#b6b9bc" stroke="#444"/><path d="M1 5l5 2 4-2M6 7v3l8-3M10 11l8-3" stroke="#555" fill="none"/>`,
  a22: `<path d="M1 9l6-3 1-2 6-2 4 4v3l-9 6-7-3z" fill="#eab47c" stroke="#5a3e20"/><path d="M1 9l6 3 5-4-4-3M12 8l5-3" stroke="#5a3e20" fill="none"/>`,
  a23: `<path d="M1 10L8 3l11-1v3l-8 8-8 1z" fill="#e7a96a" stroke="#5a3e20"/><path d="M3 11l8-1 8-7" stroke="#5a3e20" fill="none"/>`,
  a24: `<path d="M3 2h14v12h-3V5H6v9H3z" fill="#999" stroke="#333"/><path d="M7 6h6v7H7z" fill="#eee" stroke="#444"/>`,
  a25: `<path d="M1 11l5-1 5-6 6-2 2 2-5 2-5 7-6 2z" fill="#eceef2" stroke="#555" stroke-width="1.200"/><path d="M3 13l5-1 5-7" fill="none" stroke="#777"/>`,
  a26: `<path d="M1 5l14-3 4 3v3l-2 1v3h-2v-3l-2 1v3h-2v-3l-2 .5V14H7v-3l-3 1z" fill="#d98d48" stroke="#6e3a14"/><path d="M1 5l4 2 14-3" stroke="#6e3a14" fill="none"/>`,
  a27: `<path d="M8 1h4v7l2 3v3H6v-3l2-3z" fill="#d9a06c" stroke="#5a3e20"/>`,
  a28: `<path d="M1 3h18v2H1z" fill="#ddd" stroke="#444"/><path d="M2 5h17v8h-9C6 12 3 9 2 5z" fill="#8c9296" stroke="#333"/><path d="M8 5v6M12 5v8M16 5v8M4 9h15" stroke="#ccc"/>`,
  a29: `<path d="M7 1h6v3l-1 1v7l1 1v2H7v-2l1-1V5L7 4z" fill="#8b9094" stroke="#333"/><path d="M10 4v9" stroke="#ccc" stroke-width="1.500"/>`,
  viewports: `<path d="M4 2h10v10H4z" fill="#fff" stroke="#555" stroke-width="1.300"/><path d="M4 4L2 6v8h9l2-2" fill="#ddd" stroke="#555"/>`,
  saved: `<path d="M2 2h12v12H2z" fill="#ddd" stroke="#999"/><path d="M2 2l12 12M14 2L2 14" stroke="#555" stroke-width="1.300"/><path d="M5 5h6v6H5z" fill="#888"/>`,
  refs: `<path d="M7 2h6v12H4v-3" fill="#fff" stroke="#444" stroke-width="1.300"/><path d="M1 8h6a2.500 2.500 0 1 0-2-4" fill="none" stroke="#333" stroke-width="1.600"/>`,
  layersW: `<path d="M2 4v8c2 3 10 3 12 0V4z" fill="#79aef0" stroke="#1c3c74"/><path d="M2 4c2-3 10-3 12 0-2 3-10 3-12 0zM2 8c2 3 10 3 12 0" fill="#cfe2ff" stroke="#1c3c74"/>`,
  link: `<rect x="1" y="5" width="5" height="6" fill="#fff" stroke="#555" stroke-width="1.300"/><rect x="6" y="5" width="5" height="6" fill="#ddd" stroke="#555" stroke-width="1.300"/><rect x="10" y="5" width="5" height="6" fill="#fff" stroke="#555" stroke-width="1.300"/>`,
  prev: `<path d="M12 4v8L4 8z" fill="none" stroke="#777" stroke-width="1.500"/>`,
  dot: `<circle cx="8" cy="8" r="4" fill="none" stroke="#222" stroke-width="2"/>`,
  next: `<path d="M4 3.500v9L13 8z" fill="none" stroke="#111" stroke-width="2"/>`,
  shadow: `<path d="M3 3h7v7H3z" fill="#fff" stroke="#555" stroke-width="1.500"/><path d="M5 12.500h7.500V5" fill="none" stroke="#999" stroke-width="2"/>`,
  eye: `<path d="M1 8c3-6 11-6 14 0-3 6-11 6-14 0z" fill="#e8edf4" stroke="#5c6878" stroke-width="1.400"/><circle cx="8" cy="8" r="3" fill="#34404e"/>`,
  edit: `<path d="M14 2L8 8M11 1l3 4" stroke="#888" stroke-width="2.200"/><circle cx="5.500" cy="10" r="3.500" fill="#ccc" stroke="#888" stroke-width="1.500"/>`,
}

const basicTools = ['select', 'hand', 'fly', 'zoom', 'text', 'callout', 'locus', 'cyl', 'line', 'dline', 'rect', 'rrect', 'circle', 'ellipse', 'arc', 'free', 'poly1', 'poly2', 'poly3', 'hex', 'spiral', 'dropper', 'wand', 'arrowEye', 'scale', 'reshape', 'rotate', 'mirror', 'knife', 'chain', 'comb', 'hatch', 'trim', 'scissors', 'fillet', 'chamfer', 'offset', 'eraser', 'dup', 'plate']
const flyouts = new Set(['hand', 'callout', 'arc', 'poly2', 'eraser'])

const buildTools = ['Rechte muur', 'Ronde muur', 'Verbind muren', 'Verbind componen...', 'Muuruiteinde', 'Bewerk vliesgevel', 'Plaat', 'Afvloeiing plaat', 'Structuurelement', 'Helling', 'Dupliceer symbool...', 'Herstel muur', 'Binnendeur', 'Binnenraam of -deur', 'Buitenraam of -deur', 'Glasbouwstenen', 'Tussenstijl', 'Ruimte', 'Kolom', 'Pilaster', 'Trap (basis)', 'Trap (uitgebreid)', 'Hellend vlak', 'Lift', 'Roltrap', 'Kettingextrusie', 'Funderingspaal', 'Hanggoot', 'Regenpijp']
const expandable = new Set(['Verbind muren', 'Hanggoot'])

const STEP = 69.65
const ORIGIN = { x: 676.3, y: 382.5 }

function ticks(from: number, to: number, origin: number): { major: Tick[]; minor: number[] } {
  const major: Tick[] = []
  const minor: number[] = []
  for (let i = from; i <= to; i++) major.push({ at: Math.round(origin + i * STEP) + 0.5, label: String(Math.abs(i) * 500) })
  for (let i = from - 1; i <= to; i++) for (let k = 1; k < 5; k++) minor.push(Math.round(origin + (i + k / 5) * STEP) + 0.5)
  return { major, minor }
}
const horizontal = ticks(-9, 10, ORIGIN.x)
const vertical = ticks(-5, 6, ORIGIN.y)

const squares = [264.5, 438.5, 611.5, 785.5]
const circles = [311.7, 457, 602.7, 748.3, 894, 1039.9]

const layers = ref<Layer[]>([
  { name: 'Ontwerplaag-3', nr: 1 },
  { name: 'Ontwerplaag-2', nr: 2 },
  { name: 'Ontwerplaag-1', nr: 3 },
])
const activeLayer = ref(3)
const activeTool = ref('dup')

const info = ref([
  { label: 'Mpnt X:', value: '' },
  { label: 'Mpnt Y:', value: '-955' },
  { label: 'Straal:', value: '338' },
  { label: 'Diameter:', value: '675' },
  { label: 'Hoek v.d. boog:', value: '360,00°' },
])
const duplicates = ref('5')
const rotation = ref('0,00°')
const layerName = ref('')
const query = ref('')
</script>

<template>
  <div class="app">
    <header class="menubar">
      <svg class="ic apple" viewBox="0 0 16 16" v-html="icons.apple" />
      <nav>
        <a href="#" class="strong">Vectorworks</a>
        <a v-for="m in menus" :key="m" href="#">{{ m }}</a>
      </nav>
      <div class="tray">
        <span v-for="n in ['camera', 'cloudcc', 'viewer', 'drive', 'airplay', 'wifi', 'speaker']" :key="n" class="cell">
          <svg class="ic" viewBox="0 0 16 16" v-html="icons[n]" />
        </span>
        <span class="cell flag"><svg class="ic" viewBox="0 0 16 16" v-html="icons.flag" /></span>
        <span class="clock">Wo 09:12</span>
        <span class="lang">DE-NL</span>
        <span v-for="n in ['search', 'siri', 'list']" :key="n" class="cell end">
          <svg class="ic" viewBox="0 0 16 16" v-html="icons[n]" />
        </span>
      </div>
    </header>

    <div class="titlebar">
      <div class="lights">
        <button class="bulb off" aria-label="Sluit" /><button class="bulb amber" aria-label="Minimaliseer" /><button class="bulb green" aria-label="Vergroot" />
        <span class="product">Vectorworks Studio 2020</span>
      </div>
      <span class="doc">Naamloos 5</span>
      <div class="login">
        <svg class="ic" viewBox="0 0 16 16" v-html="icons.bell" />
        <button class="plain"><svg class="ic" viewBox="0 0 16 16" v-html="icons.lock" />Log in</button>
      </div>
    </div>

    <div class="work">
      <aside class="left">
        <section class="palette basic">
          <h2 class="head"><button class="x" aria-label="Sluit">×</button>Basisgereedschappen</h2>
          <div class="toolgrid">
            <button v-for="t in basicTools" :key="t" :class="{ on: t === activeTool }" :aria-label="t" @click="activeTool = t">
              <svg class="ic" viewBox="0 0 16 16" v-html="icons[t]" />
              <svg v-if="flyouts.has(t)" class="corner" viewBox="0 0 6 6"><path d="M5 1v4H1z" fill="#fff" stroke="#555" /></svg>
            </button>
          </div>
          <div class="scroller"><button aria-label="Meer"><i class="down" /></button></div>
        </section>
        <div class="grip"><i /><i /><i /></div>
        <section class="palette extra">
          <h2 class="head"><button class="x" aria-label="Sluit">×</button>Aanvullende gereed...</h2>
          <ul class="build">
            <li v-for="(t, i) in buildTools" :key="t">
              <button><svg class="wide" viewBox="0 0 20 16" v-html="icons['a' + (i + 1)]" /><span>{{ t }}</span>
                <svg v-if="expandable.has(t)" class="more" viewBox="0 0 6 8"><path d="M1 1l4 3-4 3z" fill="#fff" stroke="#444" /></svg>
              </button>
            </li>
          </ul>
          <div class="sets">
            <button v-for="n in 10" :key="n" :class="{ on: n === 4 }" :aria-label="'Set ' + n"><svg class="ic" viewBox="0 0 16 16" v-html="icons['s' + n]" /></button>
          </div>
          <div class="scroller"><button aria-label="Meer"><i class="down" /></button></div>
        </section>
      </aside>

      <div class="split"><i /><i /><i /></div>

      <main class="center">
        <div class="tabs">
          <div class="tab"><button class="x" aria-label="Sluit">×</button>Naamloos 5</div>
          <svg class="slash" viewBox="0 0 8 16"><path d="M0 1h3l5 14H5z" fill="#2a2a2a" /></svg>
        </div>

        <div class="viewbar">
          <div class="slot s-nav">
            <button class="plain"><svg class="ic" viewBox="0 0 16 16" v-html="icons.back" /></button>
            <button class="plain"><svg class="ic" viewBox="0 0 16 16" v-html="icons.fwd" /></button>
            <i class="sep" />
            <button class="plain"><svg class="ic" viewBox="0 0 16 16" v-html="icons.classes" /></button>
          </div>
          <select class="pick grow" aria-label="Klasse"><option>Geen</option></select>
          <div class="slot s-layer">
            <i class="sep" />
            <button class="plain"><svg class="ic" viewBox="0 0 16 16" v-html="icons.layers" /></button>
            <button class="plain"><svg class="ic" viewBox="0 0 16 16" v-html="icons.blank" /></button>
          </div>
          <select class="pick grow" aria-label="Laag"><option>Ontwerplaag-1</option></select>
          <div class="slot s-plane"><i class="sep" /><svg class="ic big" viewBox="0 0 16 16" v-html="icons.planeEye" /></div>
          <select class="pick grow" aria-label="Vlak"><option>Ontwerplaagvlak</option></select>
          <button class="pick iconpick"><svg class="ic" viewBox="0 0 16 16" v-html="icons.eyePage" /></button>
          <div class="slot s-zoom">
            <button class="plain"><svg class="ic" viewBox="0 0 16 16" v-html="icons.pageZoom" /></button>
            <button class="plain"><svg class="ic" viewBox="0 0 16 16" v-html="icons.objZoom" /></button>
            <i class="sep" />
            <svg class="ic" viewBox="0 0 16 16" v-html="icons.mag" />
          </div>
          <select class="pick pct" aria-label="Zoom"><option>99%</option></select>
          <div class="slot s-grid">
            <button class="plain"><svg class="ic big" viewBox="0 0 16 16" v-html="icons.pinkGrid" /></button>
            <button class="plain on"><svg class="ic big" viewBox="0 0 16 16" v-html="icons.teal" /></button>
          </div>
          <select class="pick grow" aria-label="Aanzicht"><option>2D/Plan</option></select>
          <div class="slot s-angle"><svg class="ic" viewBox="0 0 16 16" v-html="icons.angle" /></div>
          <input v-model="rotation" class="field rot" aria-label="Rotatie">
          <div class="slot s-struct">
            <button class="plain on"><svg class="ic" viewBox="0 0 16 16" v-html="icons.struct" /></button>
            <button class="plain"><svg class="ic" viewBox="0 0 16 16" v-html="icons.grid" /></button>
          </div>
          <select class="pick grow" aria-label="Projectie"><option>2D/Plan</option></select>
          <button class="pick iconpick"><svg class="ic" viewBox="0 0 16 16" v-html="icons.pot" /></button>
          <button class="pick iconpick"><svg class="ic" viewBox="0 0 16 16" v-html="icons.pal" /></button>
          <div class="slot s-end"><button class="plain"><svg class="ic" viewBox="0 0 16 16" v-html="icons.tri" /></button></div>
        </div>

        <div class="toolbar">
          <button class="mode"><svg class="ic" viewBox="0 0 16 16" v-html="icons.dupA" /></button>
          <button class="mode on"><svg class="ic" viewBox="0 0 16 16" v-html="icons.dupB" /></button>
          <button class="mode"><svg class="ic" viewBox="0 0 16 16" v-html="icons.dupC" /></button>
          <i class="sep" />
          <button class="mode on"><svg class="ic" viewBox="0 0 16 16" v-html="icons.dupRed" /></button>
          <i class="sep" />
          <button class="mode"><svg class="ic" viewBox="0 0 16 16" v-html="icons.tools" /></button>
          <i class="sep tight" />
          <label class="dups">Aantal duplicaten:<input v-model="duplicates" class="field"></label>
          <i class="sep tight" />
          <span>Verplaats : Verdeel</span>
          <div class="rightset">
            <button v-for="(n, i) in ['snapArc', 'gear', 'gear', 'hatchSh', 'sheet', 'nodes', 'frame', 'clock']" :key="i" class="plain" :class="{ caret: n === 'gear' }"><svg class="ic" viewBox="0 0 16 16" v-html="icons[n]" /></button>
            <button class="plain last"><svg class="ic" viewBox="0 0 16 16" v-html="icons.tri" /></button>
          </div>
          <div class="hulp"><button class="x" aria-label="Sluit">×</button><i class="dash" /><span>Hulpbronnenbeheer</span><b>?</b></div>
        </div>

        <div class="sheet">
          <svg class="origin" viewBox="0 0 10 9"><circle cx="5" cy="4.500" r="2.500" fill="#fff" stroke="#444" /><path d="M5 0v2M5 7v2M0 4.500h2.500M7.500 4.500H10" stroke="#444" /></svg>
          <svg class="ruler top">
            <line x1="0" x2="100%" y1="8.500" y2="8.500" class="rl" />
            <line v-for="m in horizontal.minor" :key="'m' + m" :x1="m" :x2="m" y1="7" y2="9" class="rl" />
            <g v-for="t in horizontal.major" :key="t.at"><line :x1="t.at" :x2="t.at" y1="0" y2="9" class="rl" /><text :x="t.at + 2" y="7">{{ t.label }}</text></g>
            <rect x="1039" y="0" width="2" height="9" fill="#d6d400" />
          </svg>
          <svg class="ruler side">
            <line y1="0" y2="100%" x1="8.500" x2="8.500" class="rl" />
            <line v-for="m in vertical.minor" :key="'m' + m" :y1="m" :y2="m" x1="7" x2="9" class="rl" />
            <g v-for="t in vertical.major" :key="t.at"><line :y1="t.at" :y2="t.at" x1="0" x2="9" class="rl" /><text :transform="`translate(7 ${t.at - 2}) rotate(-90)`">{{ t.label }}</text></g>
            <rect x="0" y="515" width="9" height="2" fill="#d6d400" />
          </svg>
          <div class="canvas">
            <svg class="drawing">
              <rect v-for="x in squares" :key="x" :x="x" y="152.500" width="94" height="93" fill="none" stroke="#333" />
              <circle v-for="(c, i) in circles" :key="c" :cx="c" cy="515.700" r="47.200" fill="none" :stroke="i ? '#bd7f2c' : '#4a4a4a'" :stroke-width="i ? 1.800 : 1" />
              <path d="M1029 515.500h22M1040 505v22" stroke="#6a4048" />
              <rect x="1038" y="514" width="4" height="4" fill="#e0182c" />
              <path d="M1038.500 510.500h6M1041.500 507.500v6" stroke="#222" stroke-width="1.600" />
              <rect x="1049.500" y="495.500" width="38" height="10" fill="#fdfdf6" stroke="#888" />
              <text x="1051" y="503" class="tip">Middelpunt</text>
            </svg>

            <div class="float">
              <div class="dragbar" />
              <h2 class="head"><button class="x" aria-label="Sluit">×</button>Kenmerken<b>?</b></h2>
              <div class="attrs">
                <div class="row"><svg class="ic" viewBox="0 0 16 16" v-html="icons.fill" /><span class="swatchpick"><i /><select class="pick updown" aria-label="Vulling"><option>Egale...</option></select></span></div>
                <button class="swatch" aria-label="Vulkleur" />
                <div class="row"><svg class="ic" viewBox="0 0 16 16" v-html="icons.pen" /><span class="swatchpick"><i /><select class="pick updown" aria-label="Pen"><option>Egale...</option></select></span></div>
                <button class="swatch black" aria-label="Penkleur" />
                <button class="opacity">100%/100%</button>
                <div class="shade"><span>Slagscha...</span><button><svg class="ic" viewBox="0 0 16 16" v-html="icons.shadow" /></button><button>...</button></div>
                <div class="weight"><i /><select class="pick updown" aria-label="Lijndikte"><option>0,10</option></select></div>
                <div class="ends"><button><i class="down" /></button><button class="mid"><svg class="ic" viewBox="0 0 16 16" v-html="icons.link" /></button><button><i class="down" /></button></div>
                <div class="fold"><button aria-label="Meer"><i class="down" /></button></div>
              </div>
              <div class="grip"><i /><i /><i /></div>
              <h2 class="head"><button class="x" aria-label="Sluit">×</button>Restricties<b>?</b></h2>
              <div class="snaps">
                <button v-for="n in 8" :key="n" :class="{ on: n < 6 && n > 1 }" :aria-label="'Restrictie ' + n"><svg class="ic" viewBox="0 0 16 16" v-html="icons['c' + n]" /></button>
              </div>
            </div>
          </div>
        </div>
      </main>

      <div class="split"><i /><i /><i /></div>

      <aside class="right">
        <section class="info">
          <h2 class="head light"><button class="x" aria-label="Sluit">×</button>Infopalet<b>?</b></h2>
          <div class="tabline">
            <div class="seg three"><button class="on">Object</button><button>Gegevens</button><button>Rendering</button></div>
            <button class="popout" aria-label="Menu">▹</button>
          </div>
          <div class="selrow"><strong>5 Cirkels</strong>
            <div class="steps"><button class="w"><svg class="ic big" viewBox="0 0 16 16" v-html="icons.link" /></button><button v-for="n in ['prev', 'dot', 'next']" :key="n"><svg class="ic" viewBox="0 0 16 16" v-html="icons[n]" /></button></div>
          </div>
          <div class="form">
            <label class="line">Klasse:<select class="pick k"><option>Geen</option></select></label>
            <label class="line">Laag:<select class="pick l updown"><option>Ontwerplaag-1</option></select></label>
            <label class="line">Vlak:<select class="pick v"><option>Ontwerplaagvlak</option></select></label>
            <label v-for="f in info" :key="f.label" class="line"><span>{{ f.label }}</span><input v-model="f.value" class="field"></label>
          </div>
          <dl class="facts"><dt>Omtrek:</dt><dd>10603mm</dd><dt>Oppervlakte:</dt><dd>1,789 m2</dd></dl>
          <label class="naam">Naam:<input v-model="layerName" class="field" placeholder="*GESELECTEERD*"></label>
        </section>
        <div class="grip"><i /><i /><i /></div>
        <section class="navi">
          <h2 class="head light"><button class="x" aria-label="Sluit">×</button>Navigatie - Ontwerplagen<b>?</b></h2>
          <div class="tabline">
            <div class="seg six"><button v-for="n in ['classes', 'layersW', 'viewports', 'saved', 'eyePage', 'refs']" :key="n" :class="{ on: n === 'layersW' }" :aria-label="n"><svg class="ic" viewBox="0 0 16 16" v-html="icons[n]" /></button></div>
            <button class="popout" aria-label="Menu">▹</button>
          </div>
          <label class="nline">Weergave:<select class="pick updown"><option>Toon alleen actieve</option></select></label>
          <label class="nline">Filter:<select class="pick updown"><option>&lt;Alle lagen&gt;</option></select></label>
          <div class="search"><svg class="ic" viewBox="0 0 16 16" v-html="icons.searchGrey" /><input v-model="query" aria-label="Zoek"></div>
          <div class="list">
            <table>
              <colgroup><col class="w9"><col class="w11"><col class="w11"><col class="w20"><col><col class="w18"><col class="w26"></colgroup>
              <thead><tr><th colspan="3">Zichtb...</th><th /><th>Ontwerplaag</th><th>#</th><th>Bouw</th></tr></thead>
              <tbody>
                <tr v-for="l in layers" :key="l.nr" :class="{ active: l.nr === activeLayer }" @click="activeLayer = l.nr">
                  <td class="g"><svg class="eye" viewBox="0 0 16 16" v-html="icons.eye" /></td><td class="g" /><td class="g" />
                  <td class="mark"><svg v-if="l.nr === activeLayer" class="eye" viewBox="0 0 16 16" v-html="icons.edit" /></td>
                  <td>{{ l.name }}</td><td>{{ l.nr }}</td><td />
                </tr>
              </tbody>
            </table>
            <div class="rest"><i class="w9" /><i class="w11" /><i class="w11" /></div>
            <div class="hscroll"><i /></div>
          </div>
        </section>
      </aside>
    </div>

    <footer class="status">
      <span class="hint">Druk op F1 of klik op het ?-icoon om de Vectorworks help te raadplegen.</span>
      <span class="cx">X:&nbsp; 2610</span><span class="cy">Y:&nbsp; -955</span><span class="cl">L:&nbsp; 0</span><span class="ca">A:&nbsp; 0,00°</span><span class="play">▸</span>
    </footer>
  </div>
</template>

<style>
html, body { margin: 0; overflow: hidden; }
</style>

<style scoped>
.app { height: 100vh; display: grid; grid-template-rows: 14px 14px minmax(0, 1fr) 9px; font: 6px/8px Inter, "Noto Sans", sans-serif; color: #141414; background: #ececec; overflow: hidden; }
.app * { box-sizing: border-box; }
button, input, select { font: inherit; color: inherit; margin: 0; padding: 0; border: 0; background: none; border-radius: 0; outline: none; }
button { display: flex; align-items: center; justify-content: center; }
h2 { margin: 0; font-weight: 400; }
ul, dl, dd { margin: 0; padding: 0; list-style: none; }
svg { display: block; flex: none; }
.ic { width: 12px; height: 12px; }
.ic.big { width: 15px; height: 14px; }
.on { background: #c6c6c6; }
.x { width: 8px; font-size: 9px; line-height: 8px; color: #777; }

.menubar { display: flex; align-items: center; background: #1e1f21; color: #fff; font-size: 9px; padding: 0 8px 0 13px; }
.menubar .apple { width: 11px; height: 11px; margin-right: 12px; }
nav { display: flex; gap: 12px; }
nav a { color: inherit; text-decoration: none; }
nav .strong { font-weight: 700; margin-right: 1px; }
.tray { margin-left: auto; display: flex; align-items: center; font-weight: 500; }
.cell { width: 18px; display: flex; justify-content: center; }
.cell .ic { width: 11px; height: 11px; }
.cell.flag { width: 29px; }
.cell.end { width: 21px; }
.clock { width: 49px; }
.lang { width: 34px; }

.titlebar { display: grid; grid-template-columns: 1fr auto 1fr; align-items: center; background: linear-gradient(#e9e9e9, #d4d4d4); border-bottom: 1px solid #b9b9b9; font-size: 8px; color: #444; }
.lights { display: flex; align-items: center; padding-left: 6px; gap: 5px; }
.bulb { width: 8px; height: 8px; border-radius: 50%; }
.off { background: radial-gradient(#888 2px, #d4d4d4 3px); border: 1px solid #bbb; }
.amber { background: #f5b32f; }
.green { background: #2fc046; }
.product { color: #aaa; margin-left: 4px; }
.doc { font-weight: 500; }
.login { display: flex; justify-content: flex-end; align-items: center; gap: 13px; }
.login .ic { width: 9px; height: 9px; margin-right: 2px; }
.plain { height: 14px; }

.work { display: grid; grid-template-columns: 92px 4px minmax(0, 1fr) 3px 179px; min-height: 0; }
.split { background: #c0c0c0; display: flex; flex-direction: column; align-items: center; justify-content: center; gap: 2px; }
.split i, .grip i { width: 2px; height: 1px; background: #777; }
.grip { height: 3px; background: #c0c0c0; display: flex; align-items: center; justify-content: center; gap: 2px; flex: none; }

.left { display: flex; flex-direction: column; background: #fff; border-left: 1px solid #aaa; min-height: 0; }
.head { height: 11px; display: flex; align-items: center; background: #e2e2e2; font-size: 7px; line-height: 10px; padding-left: 1px; white-space: nowrap; flex: none; }
.head .x { margin-right: 3px; }
.head b { margin-left: auto; padding-right: 5px; color: #aaa; font-size: 8px; }
.head.light { background: #f1f1f1; }
.basic { height: 303px; display: flex; flex-direction: column; }
.toolgrid { width: 81px; height: 164px; display: grid; grid-template: repeat(10, 1fr) / repeat(4, 1fr); }
.toolgrid button { position: relative; }
.corner { position: absolute; right: 0; bottom: 1px; width: 5px; height: 5px; }
.scroller { margin-top: auto; height: 9px; background: #ececec; display: flex; justify-content: center; align-items: center; }
.scroller button, .fold button { width: 12px; height: 5px; background: #f8f8f8; border: 1px solid #bbb; }
.down { border: 2px solid transparent; border-top: 2px solid #222; border-bottom: 0; }
.extra { flex: 1; display: flex; flex-direction: column; min-height: 0; }
.build { height: 476px; display: grid; grid-template-rows: repeat(29, 1fr); flex: none; font-family: Roboto, "Liberation Sans", sans-serif; font-size: 7px; }
.build li { display: flex; }
.build button { width: 100%; justify-content: flex-start; gap: 3px; padding-left: 3px; white-space: nowrap; }
.wide { width: 17px; height: 14px; }
.more { width: 4px; height: 6px; margin-left: auto; }
.sets { margin-top: auto; background: #ececec; padding: 1px 9px 0 0; display: grid; grid-template-columns: repeat(4, 1fr); grid-auto-rows: 16px; gap: 1px; }
.sets button { background: #f3f3f3; box-shadow: 0 0 0 1px #c2c2c2; }
.sets button.on { background: #bcbcbc; }
.sets .ic { width: 14px; height: 14px; }
.extra .scroller { margin-top: 0; }

.center { display: flex; flex-direction: column; min-width: 0; min-height: 0; }
.tabs { height: 16px; display: flex; background: linear-gradient(#c3c3c3, #d0d0d0); }
.tab { width: 156px; display: flex; align-items: center; padding: 2px 0 0 10px; gap: 2px; font-size: 8px; line-height: 12px; font-weight: 500; color: #222; background: linear-gradient(#fafafa, #ececec); clip-path: polygon(6px 1px, 150px 1px, 156px 100%, 1px 100%); }
.slash { width: 8px; height: 16px; margin-left: -6px; }
.viewbar { height: 17px; display: flex; align-items: center; background: #eee; border-bottom: 1px solid #d2d2d2; padding-top: 1px; }
.slot { display: flex; align-items: center; height: 100%; }
.slot .on { height: 15px; }
.sep { width: 1px; height: 12px; background: #d0d0d0; flex: none; }
.s-nav { width: 54px; padding-left: 2px; gap: 2px; }
.s-nav .ic { margin-right: 1px; }
.s-layer { width: 41px; padding-left: 6px; gap: 1px; }
.s-layer .plain:first-of-type { margin-left: 2px; }
.s-layer .ic { width: 11px; height: 11px; }
.s-plane { width: 26px; padding-left: 5px; gap: 3px; }
.s-zoom { width: 55px; padding-left: 6px; gap: 4px; }
.s-zoom .ic { width: 11px; height: 11px; }
.s-grid { width: 40px; padding-left: 3px; gap: 2px; }
.s-grid .ic { width: 14px; height: 12px; }
.s-angle { width: 20px; padding-left: 5px; }
.s-struct { width: 39px; padding-left: 3px; gap: 3px; }
.s-struct .plain { width: 15px; }
.s-end { width: 74px; justify-content: flex-end; padding-right: 5px; }
.s-end .ic, .rightset .last .ic { width: 9px; height: 9px; }
.pick {
  height: 10px; appearance: none; padding-left: 6px; border-radius: 2px; border: 1px solid #cfcfcf; min-width: 0;
  background: url("data:image/svg+xml,%3Csvg xmlns='http://www.w3.org/2000/svg' viewBox='0 0 9 9'%3E%3Crect width='9' height='9' rx='1' fill='%232f86ee'/%3E%3Cpath d='M2.500 3.500l2 2 2-2' fill='none' stroke='%23fff' stroke-width='1.200'/%3E%3C/svg%3E") right center / 9px 9px no-repeat #fff;
}
.pick.updown { background-image: url("data:image/svg+xml,%3Csvg xmlns='http://www.w3.org/2000/svg' viewBox='0 0 9 9'%3E%3Crect width='9' height='9' rx='1' fill='%232f86ee'/%3E%3Cpath d='M2.800 3.500l1.700-1.700 1.700 1.700M2.800 5.500l1.700 1.700 1.700-1.700' fill='none' stroke='%23fff'/%3E%3C/svg%3E"); }
.grow { flex: 1 1 0; }
.iconpick { width: 29px; margin-left: 4px; padding-right: 6px; }
.iconpick .ic { width: 11px; height: 10px; }
.pct { width: 40px; padding-left: 3px; }
.field { height: 10px; background: #fff; border: 1px solid #cdcdcd; padding-left: 2px; min-width: 0; }
.rot { width: 43px; }

.toolbar { position: relative; height: 24px; display: flex; align-items: center; background: #ececec; padding-left: 3px; white-space: nowrap; }
.mode { width: 19px; height: 16px; }
.mode .ic { width: 16px; height: 14px; }
.toolbar .sep { height: 16px; margin: 0 5px; }
.toolbar .sep.tight { margin: 0 3px; }
.dups { display: flex; align-items: center; gap: 6px; padding-left: 3px; }
.dups .field { width: 32px; }
.rightset { margin-left: auto; display: flex; align-items: center; padding-right: 5px; gap: 9px; }
.rightset .ic { width: 16px; height: 14px; }
.caret { width: 22px; }
.hulp { position: absolute; left: 42%; right: 149px; top: 4px; height: 11px; display: flex; align-items: center; padding: 0 6px 0 2px; background: linear-gradient(90deg, #fff, #e2e2e2); box-shadow: 0 2px 5px rgba(0, 0, 0, .4); font-size: 7px; }
.dash { width: 4px; height: 1px; background: #777; margin: 0 6px 0 1px; }
.hulp b { margin-left: auto; color: #aaa; font-size: 8px; }

.sheet { flex: 1; display: grid; grid-template: 9px minmax(0, 1fr) / 10px minmax(0, 1fr); min-height: 0; background: #fff; }
.origin { width: 10px; height: 9px; }
.ruler { overflow: hidden; background: #fcfcfc; }
.top { width: 100%; height: 9px; }
.side { width: 9px; height: 100%; grid-row: 2; }
.rl { stroke: #777; stroke-width: 1; }
.ruler text { font-size: 6px; fill: #666; }
.canvas { position: relative; background: #fff; min-height: 0; }
.drawing { width: 100%; height: 100%; }
.tip { font: 7px "Liberation Sans", Arial, sans-serif; fill: #111; }

.float { position: absolute; left: 3px; top: 5px; width: 83px; background: #ececec; border-radius: 3px; box-shadow: 0 1px 6px rgba(0, 0, 0, .5); padding-bottom: 12px; }
.dragbar { height: 9px; background: #f3f3f3; border-radius: 3px 3px 0 0; }
.float .head .x { margin-left: 1px; }
.attrs { display: flex; flex-direction: column; padding: 3px 7px 0 6px; }
.row { height: 12px; display: flex; align-items: center; gap: 4px; }
.row .ic { width: 10px; height: 10px; }
.swatchpick { flex: 1; position: relative; display: flex; font-size: 7px; }
.swatchpick i { position: absolute; left: 5px; top: 2px; width: 9px; height: 8px; background: #222; }
.swatchpick .pick { width: 100%; height: 11px; padding-left: 19px; }
.swatch { height: 15px; margin: 1px 0 4px; background: #fff; border: 1px solid #c8c8c8; }
.black { background: #000; }
.opacity { height: 10px; border: 1px solid #bbb; background: #f2f2f2; font-size: 7px; }
.shade { height: 10px; margin-top: 5px; display: flex; font-size: 7px; align-items: center; }
.shade span { flex: 1; }
.shade button, .ends button { width: 15px; height: 10px; border: 1px solid #c4c4c4; background: #f2f2f2; }
.shade .ic { width: 8px; height: 8px; }
.weight { position: relative; display: flex; margin-top: 3px; }
.weight .pick { width: 100%; padding-left: 44px; }
.weight i { position: absolute; left: 7px; top: 5px; width: 35px; height: 1px; background: #444; }
.ends { display: flex; justify-content: space-between; margin-top: 6px; }
.ends button { width: 11px; }
.ends .mid { width: 18px; }
.ends .down { border-top-color: #777; }
.fold { display: flex; justify-content: center; height: 9px; margin-top: 3px; padding-top: 1px; border-top: 1px solid #ddd; }
.snaps { display: grid; grid-template: repeat(2, 16px) / repeat(4, 1fr); gap: 1px; background: #bbb; margin-right: 1px; }
.snaps button { background: #eee; }
.snaps .on { background: #c9c9c9; }
.snaps .ic { width: 14px; height: 13px; }

.right { display: flex; flex-direction: column; min-height: 0; background: #ebebeb; white-space: nowrap; }
.right .head { padding-left: 2px; }
.right .head .x { margin-right: 4px; }
.info { flex: 1; display: flex; flex-direction: column; }
.tabline { display: grid; grid-template-columns: 32px auto 1fr; align-items: center; height: 13px; padding: 2px 1px 0 0; background: linear-gradient(#f1f1f1, #e9e9e9); }
.seg { grid-column: 2; display: grid; height: 9px; border-radius: 2px; background: #fff; box-shadow: 0 0 0 1px #cfcfcf; overflow: hidden; }
.seg button { border-right: 1px solid #ddd; }
.seg .on { background: #2f86f0; color: #bcd9fb; }
.three { grid-template-columns: 32px 41px 41px; }
.popout { justify-self: end; align-self: start; width: 8px; height: 6px; border: 1px solid #aaa; color: #777; }
.selrow { height: 13px; padding: 1px 0 0 2px; display: flex; align-items: center; justify-content: space-between; font-size: 7px; margin-bottom: 2px; }
.steps { display: flex; gap: 1px; }
.steps button { width: 13px; height: 11px; background: #f4f4f4; border: 1px solid #cfcfcf; }
.steps .w { width: 16px; }
.steps .ic { width: 9px; height: 9px; }
.steps .ic.big { width: 12px; }
.form { height: 109px; display: grid; grid-template-rows: repeat(8, 1fr); padding: 0 3px 0 7px; }
.line { display: flex; align-items: center; }
.line span { width: 49px; }
.line .field { flex: 1; }
.line .pick { margin-left: auto; }
.k { width: 143px; }
.l { width: 148px; }
.v { width: 152px; }
.facts { display: grid; grid-template-columns: 50px 1fr; grid-auto-rows: 13px; align-items: center; padding-left: 7px; }
.naam { margin-top: auto; height: 11px; margin-bottom: 1px; display: flex; align-items: center; padding: 0 1px 0 4px; gap: 7px; }
.naam .field { flex: 1; }
.naam .field::placeholder { color: #bbb; opacity: 1; }
.navi { height: 284px; display: flex; flex-direction: column; }
.navi .tabline { grid-template-columns: 35px auto 1fr; height: 17px; padding: 0 3px 2px 0; flex: none; }
.six { grid-template-columns: repeat(6, 1fr); width: 112px; height: 11px; align-self: end; }
.six .ic { width: 10px; height: 10px; }
.nline { height: 10px; display: flex; align-items: center; justify-content: space-between; padding: 0 3px; flex: none; }
.navi .tabline + .nline { margin-top: 4px; }
.nline .pick { width: 125px; }
.search { position: relative; height: 12px; margin: 2px 3px; background: #fff; border: 1px solid #d2d2d2; display: flex; justify-content: center; align-items: center; flex: none; }
.search .ic { width: 8px; height: 8px; margin-right: 34px; }
.search input { position: absolute; inset: 0; width: 100%; }
.list { flex: 1; display: flex; flex-direction: column; margin: 0 0 0 3px; background: #fff; min-height: 0; }
table { width: 100%; border-collapse: collapse; table-layout: fixed; }
.w9 { width: 10px; } .w11 { width: 11px; } .w20 { width: 20px; } .w18 { width: 18px; } .w26 { width: 24px; }
th { height: 13px; padding: 0 0 0 1px; font-size: 7px; font-weight: 400; color: #666; text-align: left; border-right: 1px solid #e0e0e0; border-bottom: 1px solid #ddd; }
th:nth-child(2) { padding: 0; }
td { height: 10px; padding: 0 0 0 1px; line-height: 8px; }
td.g { padding: 0; border-right: 1px solid #e4e4e4; }
.mark { padding-left: 6px; }
.eye { width: 9px; height: 8px; }
.active { background: #b1d7fc; font-weight: 700; }
.rest { flex: 1; display: flex; }
.rest i { border-right: 1px solid #e4e4e4; }
.hscroll { height: 8px; padding: 2px 1px; background: #f6f6f6; border-top: 1px solid #e0e0e0; }
.hscroll i { display: block; width: 75%; height: 4px; border-radius: 2px; background: #bdbdbd; }

.status { display: flex; align-items: center; background: #c9c9c9; padding-left: 5px; white-space: nowrap; }
.hint { flex: 1; }
.cx { width: 53px; } .cy { width: 52px; } .cl { width: 54px; } .ca { width: 54px; } .play { width: 15px; }
</style>
